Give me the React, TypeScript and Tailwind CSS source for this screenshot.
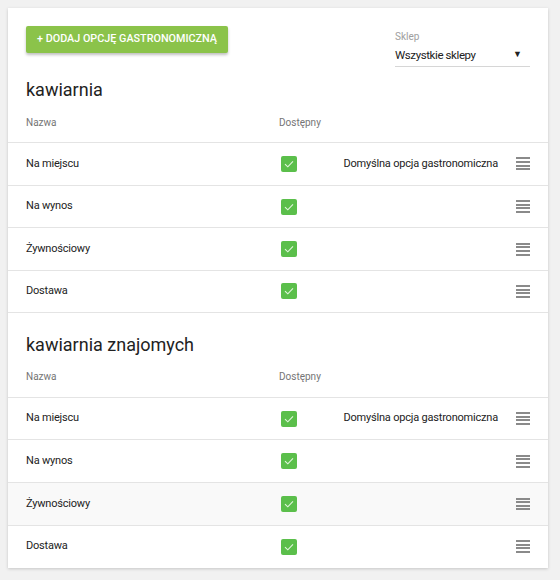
import React from "react";

// Dane sekcji (sklepów) i opcji gastronomicznych
const sections = [
  {
    name: "kawiarnia",
    options: [
      { label: "Na miejscu", isDefault: true },
      { label: "Na wynos", isDefault: false },
      { label: "Żywnościowy", isDefault: false },
      { label: "Dostawa", isDefault: false },
    ],
  },
  {
    name: "kawiarnia znajomych",
    options: [
      { label: "Na miejscu", isDefault: true },
      { label: "Na wynos", isDefault: false },
      { label: "Żywnościowy", isDefault: false, hover: true },
      { label: "Dostawa", isDefault: false },
    ],
  },
];

const CheckBox = () => (
  <div className="w-[16px] h-[16px] rounded-[2px] bg-[#5bbf4b] flex items-center justify-center">
    <svg width="10" height="8" viewBox="0 0 10 8" fill="none">
      <path d="M1 4.2 L3.8 6.8 L9 1.3" stroke="#e3f5de" strokeWidth="1.1" />
    </svg>
  </div>
);

const DragHandle = () => (
  <div className="w-[14px] flex flex-col gap-[1.6px]">
    <div className="h-[2px] bg-[#8a8a8a]" />
    <div className="h-[2px] bg-[#8a8a8a]" />
    <div className="h-[2px] bg-[#8a8a8a]" />
    <div className="h-[2px] bg-[#8a8a8a]" />
  </div>
);

const App = () => {
  return (
    <div className="min-h-[580px] bg-[#f1f1f1] pt-[8px] pl-[8px] font-['Roboto',sans-serif] text-[#222222]">
      <div className="w-[540px] bg-white shadow-[0_1px_3px_rgba(0,0,0,0.18)]">
        {/* Top bar */}
        <div className="flex justify-between items-start px-[18px] pt-[18px] h-[70px]">
          <button className="h-[27px] w-[202px] bg-[#8bc34a] text-white text-[10.8px] font-medium uppercase rounded-[2px] shadow-[0_2px_3px_rgba(0,0,0,0.25)]">
            + Dodaj opcję gastronomiczną
          </button>
          <div className="w-[135px] mt-[5px]">
            <div className="text-[10px] text-[#9e9e9e] leading-[12px]">Sklep</div>
            <div className="flex items-center justify-between h-[24px] border-b border-[#d6d6d6]">
              <span className="text-[11.5px] tracking-[-0.4px] leading-[16px]">Wszystkie sklepy</span>
              <span className="text-[9px] mr-[8px]">▼</span>
            </div>
          </div>
        </div>

        {sections.map((section, si) => (
          <div key={si} className={si > 0 ? "pt-[20px]" : ""}>
            <h2 className="px-[18px] text-[18px] leading-[24px]">{section.name}</h2>
            <div className="flex items-center h-[40px] px-[18px] text-[10px] text-[#757575]">
              <div className="w-[253px]">Nazwa</div>
              <div>Dostępny</div>
            </div>
            {section.options.map((opt, oi) => (
              <div
                key={oi}
                className={
                  "flex items-center h-[42.7px] px-[18px] border-t border-[#e4e4e4] text-[11px] tracking-[-0.2px] " +
                  (opt.hover ? "bg-[#f9f9f9] " : "") +
                  (si === 0 && oi === section.options.length - 1 ? "border-b" : "")
                }
              >
                <div className="w-[255px]">{opt.label}</div>
                <CheckBox />
                <div className="flex-1 text-right pr-[18px]">
                  {opt.isDefault ? "Domyślna opcja gastronomiczna" : ""}
                </div>
                <DragHandle />
              </div>
            ))}
          </div>
        ))}
      </div>
    </div>
  );
};

export default App;
